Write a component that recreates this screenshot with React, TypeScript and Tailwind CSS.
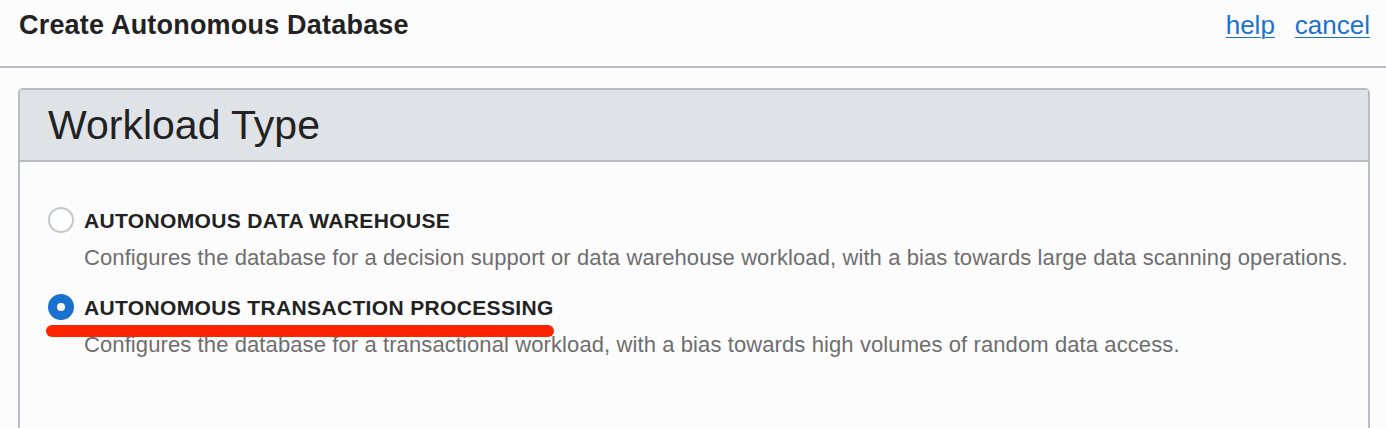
import React from 'react'

const font = { fontFamily: '"Liberation Sans", Arial, sans-serif' }

function Radio({ checked }: { checked: boolean }) {
    if (checked) {
        return (
            <span className="flex h-[26px] w-[26px] shrink-0 items-center justify-center rounded-full bg-[#1a72cf]">
                <span className="h-[8px] w-[8px] rounded-full bg-white" />
            </span>
        )
    }
    return <span className="h-[26px] w-[26px] shrink-0 rounded-full border-2 border-[#c3c7cc] bg-white" />
}

const options = [
    {
        id: 'adw',
        label: 'AUTONOMOUS DATA WAREHOUSE',
        desc: 'Configures the database for a decision support or data warehouse workload, with a bias towards large data scanning operations.',
        checked: false,
    },
    {
        id: 'atp',
        label: 'AUTONOMOUS TRANSACTION PROCESSING',
        desc: 'Configures the database for a transactional workload, with a bias towards high volumes of random data access.',
        checked: true,
    },
]

export default function App() {
    return (
        <div className="h-[428px] w-[1386px] overflow-hidden bg-[#fcfcfc]" style={font}>
            <div className="flex h-[68px] items-start justify-between border-b-2 border-[#b9bdc3] pl-[19px] pr-[16px] pt-[8px]">
                <h1 className="text-[27px] font-bold leading-[34px] tracking-[0.2px] text-[#222]">Create Autonomous Database</h1>
                <div className="flex gap-[20px] text-[26px] leading-[34px] text-[#1a72cf]">
                    <a className="underline decoration-1 underline-offset-[3px]">help</a>
                    <a className="underline decoration-1 underline-offset-[3px]">cancel</a>
                </div>
            </div>

            <div className="pl-[18px] pr-[16px] pt-[20px]">
                <div className="h-[400px] rounded-t-[5px] border-2 border-[#b9bdc3] bg-[#fcfcfc]">
                    <div className="flex h-[72px] items-center border-b-2 border-[#b9bdc3] bg-[#dfe3e7] pl-[28px]">
                        <h2 className="text-[41px] leading-[46px] text-[#222]">Workload Type</h2>
                    </div>
                    <div className="flex flex-col pl-[28px] pt-[44px]">
                        {options.map((o, i) => (
                            <div key={o.id} className={`relative flex flex-col ${i > 0 ? 'mt-[21px]' : ''}`}>
                                <div className="flex h-[28px] items-center gap-[10px]">
                                    <Radio checked={o.checked} />
                                    <span className="pt-[2px] text-[21px] font-bold tracking-[0.35px] text-[#222]">{o.label}</span>
                                </div>
                                {/* red annotation stroke drawn over the option */}
                                {o.checked && <span className="absolute left-[-2px] top-[32px] h-[12px] w-[508px] rounded-full bg-[#ff2400]" />}
                                <p className="mt-[10px] pl-[36px] text-[22px] leading-[28px] tracking-[0.1px] text-[#6e6e6e]">{o.desc}</p>
                            </div>
                        ))}
                    </div>
                </div>
            </div>
        </div>
    )
}
